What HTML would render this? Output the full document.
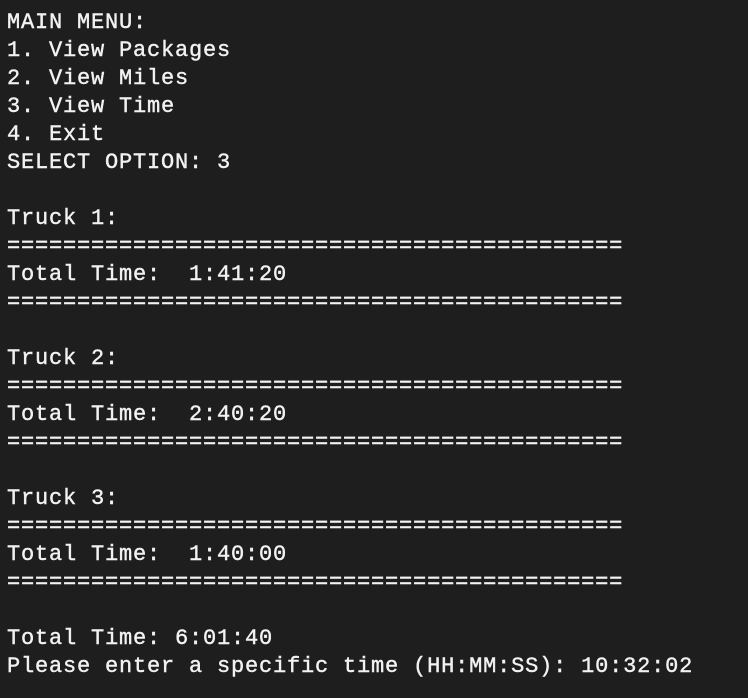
<!DOCTYPE html>
<html><head><meta charset="utf-8"><style>
html,body{margin:0;padding:0;background:#1e1e1e;}
body{width:748px;height:698px;overflow:hidden;}
pre{margin:0;padding:9px 0 0 7px;font-family:"Liberation Mono",monospace;font-size:22px;letter-spacing:0.8px;line-height:28px;color:#f2f2f2;-webkit-text-stroke:0.4px #f2f2f2;}
</style></head><body><pre>MAIN MENU:
1. View Packages
2. View Miles
3. View Time
4. Exit
SELECT OPTION: 3

Truck 1:
============================================
Total Time:  1:41:20
============================================

Truck 2:
============================================
Total Time:  2:40:20
============================================

Truck 3:
============================================
Total Time:  1:40:00
============================================

Total Time: 6:01:40
Please enter a specific time (HH:MM:SS): 10:32:02</pre></body></html>
